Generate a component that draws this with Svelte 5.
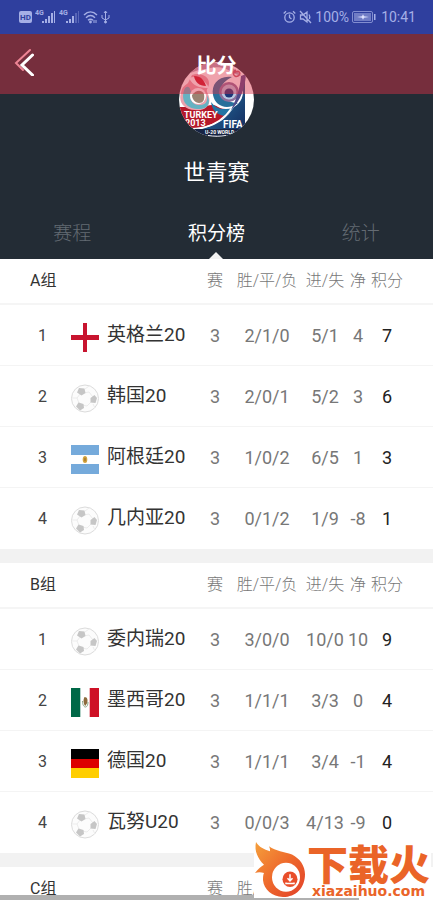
<script>
  let tabs = ['赛程', '积分榜', '统计'];
  let active = $state(1);

  const groups = [
    {
      name: 'A组',
      teams: [
        { flag: 'england', name: '英格兰20', played: 3, wdl: '2/1/0', goals: '5/1', net: 4, points: 7 },
        { flag: '', name: '韩国20', played: 3, wdl: '2/0/1', goals: '5/2', net: 3, points: 6 },
        { flag: 'argentina', name: '阿根廷20', played: 3, wdl: '1/0/2', goals: '6/5', net: 1, points: 3 },
        { flag: '', name: '几内亚20', played: 3, wdl: '0/1/2', goals: '1/9', net: -8, points: 1 }
      ]
    },
    {
      name: 'B组',
      teams: [
        { flag: '', name: '委内瑞20', played: 3, wdl: '3/0/0', goals: '10/0', net: 10, points: 9 },
        { flag: 'mexico', name: '墨西哥20', played: 3, wdl: '1/1/1', goals: '3/3', net: 0, points: 4 },
        { flag: 'germany', name: '德国20', played: 3, wdl: '1/1/1', goals: '3/4', net: -1, points: 4 },
        { flag: '', name: '瓦努U20', played: 3, wdl: '0/0/3', goals: '4/13', net: -9, points: 0 }
      ]
    },
    { name: 'C组', teams: [] }
  ];
</script>

{#snippet signal(weak)}
  <svg width="21" height="16" viewBox="0 0 21 16">
    <text x="0" y="6" font-size="7" font-weight="700" fill="currentColor">4G</text>
    <g fill="currentColor">
      <path d="M7 12h2v2H7zM10 10h2v4h-2zM13 7h2v7h-2z" />
      <path d="M16 4h2v10h-2z" opacity={weak ? 0.35 : 1} />
      <path d="M19 2h1v12h-1z" opacity={weak ? 0.35 : 1} />
    </g>
  </svg>
{/snippet}

{#snippet flag(kind)}
  <svg class="flag" viewBox="0 0 28 29" aria-hidden="true">
    {#if kind === 'england'}
      <path fill="#c8142f" d="M12 0h4v12h12v5H16v12h-4V17H0v-5h12z" />
    {:else if kind === 'argentina'}
      <path fill="#75aadb" d="M0 0h28v10H0zM0 19h28v10H0z" />
      <ellipse cx="14" cy="14.5" rx="2.3" ry="3.6" fill="#d3a640" />
      <ellipse cx="14" cy="14.5" rx="1" ry="2" fill="#b08030" />
    {:else if kind === 'mexico'}
      <path fill="#006847" d="M0 0h9.3v29H0z" />
      <path fill="#ce1126" d="M18.7 0H28v29h-9.3z" />
      <path fill="#8c6a3c" d="M13.5 9c3 0 3.500 3 2.700 6l-2 3c-1.500-2-2.400-6-.7-9z" />
      <path d="M11.500 13c0 4 1.500 6 3 6s2.500-2 2.500-5" fill="none" stroke="#8ba888" />
    {:else if kind === 'germany'}
      <path d="M0 0h28v10H0z" />
      <path fill="#d00" d="M0 10h28v9H0z" />
      <path fill="#ffce00" d="M0 19h28v10H0z" />
    {:else}
      <circle cx="14" cy="14.500" r="13.500" fill="#fcfcfc" stroke="#dcdcdc" />
      <path d="M13 9l5-1 4 5M20 18l-4 4-5-1M8 19l-2-5 3-4M14 5l4-3M22 20l2 4M1 14l5-0" fill="none" stroke="#ececec" />
      <g fill="#c6c6c6">
        <path d="M8 4l5.500 .5 1 4.500-4 2.500-4.500-3z" />
        <path d="M19.500 14l4-3 2.500 3-1.500 5-5-.5z" />
        <path d="M7.500 18.500l5 1.500.5 4-4 2.500-4-4z" />
      </g>
    {/if}
  </svg>
{/snippet}

<div class="page">
  <div class="status">
    <div class="icons">
      <svg width="13" height="14" viewBox="0 0 13 14">
        <rect y="1" width="13" height="12" rx="2" fill="currentColor" />
        <text x="6.500" y="10" text-anchor="middle" font-size="8" font-weight="700" fill="#2f3f9e">HD</text>
      </svg>
      {@render signal(false)}
      {@render signal(true)}
      <svg width="15" height="14" viewBox="0 0 15 14" fill="none" stroke="currentColor" stroke-width="1.400">
        <path d="M1 5c4-4 9-4 13 0M3 7.800c3-3 6-3 9 0M5 10.300c1.800-1.600 3.200-1.600 5 0" />
        <circle cx="7.500" cy="12" r=".7" />
        <path d="M11 10v3M13 10v3" stroke-width="1" />
      </svg>
      <svg width="9" height="14" viewBox="0 0 9 14" fill="none" stroke="currentColor">
        <path d="M4.500 1v12M1 5v3l3.500 2L8 8V5M3 3l1.500-2L6 3" />
        <circle cx="4.500" cy="12" r="1" fill="currentColor" />
      </svg>
    </div>
    <div class="icons right">
      <svg width="13" height="14" viewBox="0 0 13 14" fill="none" stroke="currentColor" stroke-width="1.300">
        <circle cx="6.500" cy="7.500" r="4.700" />
        <path d="M6.500 4.500v3l2 1.500M.7 3.500L3 1.300M12.300 3.500L10 1.300" />
      </svg>
      <svg width="13" height="14" viewBox="0 0 13 14" fill="none" stroke="currentColor" stroke-width="1.300">
        <path d="M1.500 5h2.500l4-3v10L4 9H1.500zM1 1l11 12M10 4.500c1 1.500 1 3 .4 4.500" />
      </svg>
      <span>100%</span>
      <svg width="24" height="12" viewBox="0 0 24 12">
        <rect x=".5" y=".5" width="20" height="11" rx="1.500" fill="none" stroke="currentColor" opacity=".7" />
        <rect x="2" y="2" width="17" height="8" fill="currentColor" opacity=".55" />
        <path d="M5 6l5-.8 1-2 1 2 5 .8-5 .8-1 2-1-2z" fill="#dfe3ff" />
        <path d="M22 3h1.500v6H22z" fill="currentColor" />
      </svg>
      <span class="time">10:41</span>
    </div>
  </div>

  <header class="hero">
    <div class="bar">
      <button class="back" aria-label="返回">
        <svg width="20" height="28" viewBox="0 0 20 28" fill="none" stroke-linecap="round">
          <path d="M16 2L2 15l7 7" stroke="#ee8595" stroke-width="2" />
          <path d="M18.500 7L8 17l10.500 10" stroke="#fff" stroke-width="3" />
        </svg>
      </button>
      <h1>比分</h1>
    </div>
    <svg class="logo" viewBox="0 0 75 75" role="img" aria-label="世青赛">
      <defs>
        <clipPath id="disc"><circle cx="37.500" cy="37.500" r="37.500" /></clipPath>
        <linearGradient id="sea" x1="0" y1="0" x2="1" y2="1">
          <stop offset="0" stop-color="#2a8fbd" />
          <stop offset="1" stop-color="#152b5e" />
        </linearGradient>
      </defs>
      <g clip-path="url(#disc)">
        <path fill="#fff" d="M0 0h75v75H0z" />
        <path fill="#b9a3b6" d="M8 12C20-2 50-4 62 14l-8-3C40 0 28 8 20 8z" />
        <!-- red and blue ribbons -->
        <path fill="#b5192a" d="M0 45h20c8 0 12-4 18-1 10 5 15-2 20-9-4 16-18 30-46 31L0 55z" />
        <path fill="url(#sea)" d="M66 12v57H18l-2-2c28-1 45-20 50-55z" />
        <path fill="#2274a4" d="M32 40c8 11 20 9 28-6-3 10-8 16-14 20-8-1-13-6-14-14z" />
        <path fill="none" stroke="#fff" stroke-width="1.500" d="M13 68c29-3 45-20 52-53" />
        <!-- figure eight -->
        <path fill="#eba2ae" d="M13 13c8-3 17 1 17 8 0 5-3 6-2 9 7 12-2 20-12 18C5 48-1 40 2 31c1-7 5-8 7-10z" />
        <path fill="#65b2c2" d="M6 26c4-3 5 0 6 4-3 8 3 14 9 13 6 0 8-4 7-10 5 9 0 15-10 14C6 46 1 37 6 26z" />
        <circle cx="19" cy="34" r="8" fill="#fff" />
        <path fill="#9b8372" d="M13 33c4-5 9-6 12-1 1 6-1 9-5 9s-7-4-7-8z" />
        <path fill="#fff" d="M10 16c9-3 16 2 20 10-10 0-16-2-20-10z" />
        <path fill="#c91629" d="M15 14c7 0 10 4 12 10-7 0-11-4-12-10z" />
        <!-- nine with the eye -->
        <circle cx="47" cy="30" r="17" fill="#fff" />
        <path fill="#28709b" d="M53 15C40 13 32 22 34 33c2 11 14 16 25 8-10 0-16-5-17-12 0-7 5-11 11-14z" />
        <circle cx="50" cy="30" r="10" fill="#8d6f9c" />
        <circle cx="50" cy="30" r="7.500" fill="#b9c9e2" />
        <circle cx="50" cy="31" r="4.500" fill="#1d3577" />
        <path fill="#4f4b8b" d="M67 12c-1 14-5 26-15 36 6-12 9-22 10-34z" />
        <path fill="none" stroke="#c3596a" stroke-width="1.500" d="M55 11c5-4 8 1 4 3s-7-4-2-6" />
        <path fill="#172443" d="M8 67h60v9H8z" />
        <text x="5" y="56" font-size="9" font-weight="700">TURKEY</text>
        <text x="6" y="64" font-size="9" font-weight="700">2013</text>
        <text x="44" y="66" font-size="10" font-weight="700">FIFA</text>
        <text x="26" y="72" font-size="5" font-weight="700">U-20 WORLD</text>
        <path fill="none" stroke="#fff" stroke-width="1" d="M29 73.500c6 1 13 1 18 0" />
      </g>
    </svg>
    <h2>世青赛</h2>
    <nav>
      {#each tabs as tab, i}
        <button class:active={active === i} onclick={() => (active = i)}>{tab}</button>
      {/each}
    </nav>
  </header>

  <main>
    {#each groups as group}
      <table>
        <colgroup>
          <col class="c-rank" /><col /><col class="c-played" /><col class="c-wdl" />
          <col class="c-goals" /><col class="c-net" /><col class="c-points" />
        </colgroup>
        <thead>
          <tr>
            <th class="group" colspan="2">{group.name}</th>
            <th>赛</th>
            <th>胜/平/负</th>
            <th>进/失</th>
            <th>净</th>
            <th class="last">积分</th>
          </tr>
        </thead>
        <tbody>
          {#each group.teams as team, i}
            <tr>
              <td class="rank">{i + 1}</td>
              <td><div class="team">{@render flag(team.flag)}<span>{team.name}</span></div></td>
              <td>{team.played}</td>
              <td>{team.wdl}</td>
              <td>{team.goals}</td>
              <td>{team.net}</td>
              <td class="last points">{team.points}</td>
            </tr>
          {/each}
        </tbody>
      </table>
    {/each}
  </main>

  <div class="bottom"></div>
  <div class="watermark">
    <svg width="52" height="56" viewBox="0 0 52 54" preserveAspectRatio="none" aria-hidden="true">
      <defs>
        <linearGradient id="fire" x1="0" y1="0" x2="1" y2="1">
          <stop offset="0" stop-color="#f5a03c" />
          <stop offset=".5" stop-color="#ee6a2c" />
          <stop offset="1" stop-color="#e2402a" />
        </linearGradient>
      </defs>
      <path fill="url(#fire)" d="M2 0c3 5 8 7 14 9 0-2 0-3-1-5 7 5 15 5 23 8 8 4 13 11 13 19 0 13-9 22-22 22-11 0-19-7-20-16 0-3 0-5 1-7-3-1-6-1-9 0 3-4 6-6 9-8C4 16 0 9 2 0z" />
      <circle cx="32" cy="34" r="14" fill="#fff" />
      <circle cx="36" cy="36" r="7.500" fill="#e94e2a" />
      <path d="M36 31v6M33.500 35l2.500 2.500 2.500-2.500M32 39v1h8v-1" fill="none" stroke="#fff" stroke-width="1.500" />
    </svg>
    <div class="brand">
      <strong>下载火</strong>
      <span>xiazaihuo.com</span>
    </div>
  </div>
</div>

<style>
  :global(body) {
    margin: 0;
  }
  .page {
    position: relative;
    height: 100vh;
    overflow: hidden;
    background: #fff;
    font-family: Roboto, "Noto Sans CJK SC", sans-serif;
    color: #333;
  }
  .status {
    display: flex;
    justify-content: space-between;
    align-items: center;
    height: 34px;
    padding: 0 17px 0 19px;
    background: #2f3f9e;
    color: #a5afe6;
    font-size: 14px;
  }
  .icons {
    display: flex;
    align-items: center;
    gap: 3px;
  }
  .time {
    margin-left: 2px;
  }
  .hero {
    position: relative;
    display: flex;
    flex-direction: column;
    align-items: center;
    padding-top: 28px;
    background: #232c35;
    color: #fff;
  }
  .bar {
    position: absolute;
    top: 0;
    left: 0;
    right: 0;
    height: 60px;
    box-sizing: border-box;
    padding-top: 4px;
    display: flex;
    align-items: center;
    justify-content: center;
    background: rgba(219, 48, 72, 0.45);
  }
  .back {
    position: absolute;
    left: 14px;
    top: 14px;
    padding: 0;
    border: 0;
    background: none;
    line-height: 0;
  }
  h1 {
    margin: 0;
    font-size: 20px;
    line-height: 28px;
    font-weight: 700;
  }
  .logo {
    width: 75px;
    height: 75px;
  }
  .logo text {
    fill: #fff;
  }
  h2 {
    margin: 20px 0 0;
    font-size: 22px;
    line-height: 32px;
    font-weight: 400;
  }
  nav {
    display: flex;
    width: 100%;
    margin-top: 20px;
  }
  nav button {
    position: relative;
    flex: 1;
    height: 50px;
    padding: 0;
    border: 0;
    background: none;
    font: 300 19px/30px Roboto, "Noto Sans CJK SC", sans-serif;
    color: #646b73;
  }
  nav button.active {
    color: #fff;
    font-weight: 400;
  }
  nav button.active::after {
    content: "";
    position: absolute;
    bottom: 0;
    left: 50%;
    margin-left: -7px;
    border: 7px solid transparent;
    border-top: 0;
    border-bottom-color: #f2f2f2;
  }
  main {
    display: flex;
    flex-direction: column;
    gap: 14px;
    background: #f2f2f2;
  }
  table {
    width: 100%;
    table-layout: fixed;
    border-collapse: separate;
    border-spacing: 0;
    background: #fff;
  }
  .c-rank { width: 71px; }
  .c-played { width: 30px; }
  .c-wdl { width: 74px; }
  .c-goals { width: 42px; }
  .c-net { width: 24px; }
  .c-points { width: 63px; }
  th,
  td {
    box-sizing: border-box;
    padding: 0;
    text-align: center;
    white-space: nowrap;
  }
  th {
    height: 46px;
    padding-bottom: 4px;
    border-bottom: 2px solid #f5f5f5;
    font-size: 16px;
    font-weight: 300;
    color: #777;
  }
  th.group {
    padding-left: 30px;
    text-align: left;
    font-weight: 400;
    color: #333;
  }
  td {
    height: 61px;
    border-bottom: 1px solid #f4f4f4;
    font-size: 18px;
    color: #777;
  }
  tr:last-child td {
    border-bottom-color: #fff;
  }
  th.last,
  td.last {
    padding-right: 29px;
  }
  .rank {
    padding-left: 14px;
    font-size: 16px;
    color: #444;
  }
  .points {
    color: #222;
  }
  .team {
    display: flex;
    align-items: center;
    gap: 8px;
    font-size: 19px;
    line-height: 28px;
    color: #333;
  }
  .flag {
    flex: none;
    width: 28px;
    height: 29px;
    margin-top: 4px;
  }
  .bottom {
    position: absolute;
    left: 0;
    bottom: 0;
    width: 83%;
    height: 5px;
    background: #b0b0b0;
  }
  .watermark {
    position: absolute;
    right: 2px;
    bottom: 2px;
    display: flex;
    align-items: flex-end;
    width: 177px;
    height: 56px;
    background: #fff;
  }
  .brand {
    flex: 1;
    display: flex;
    flex-direction: column;
    align-items: center;
    color: #ea6428;
  }
  .brand strong {
    font-size: 41px;
    line-height: 36px;
    font-weight: 900;
  }
  .brand span {
    font: 700 14px/14px "DejaVu Sans", sans-serif;
  }
</style>
